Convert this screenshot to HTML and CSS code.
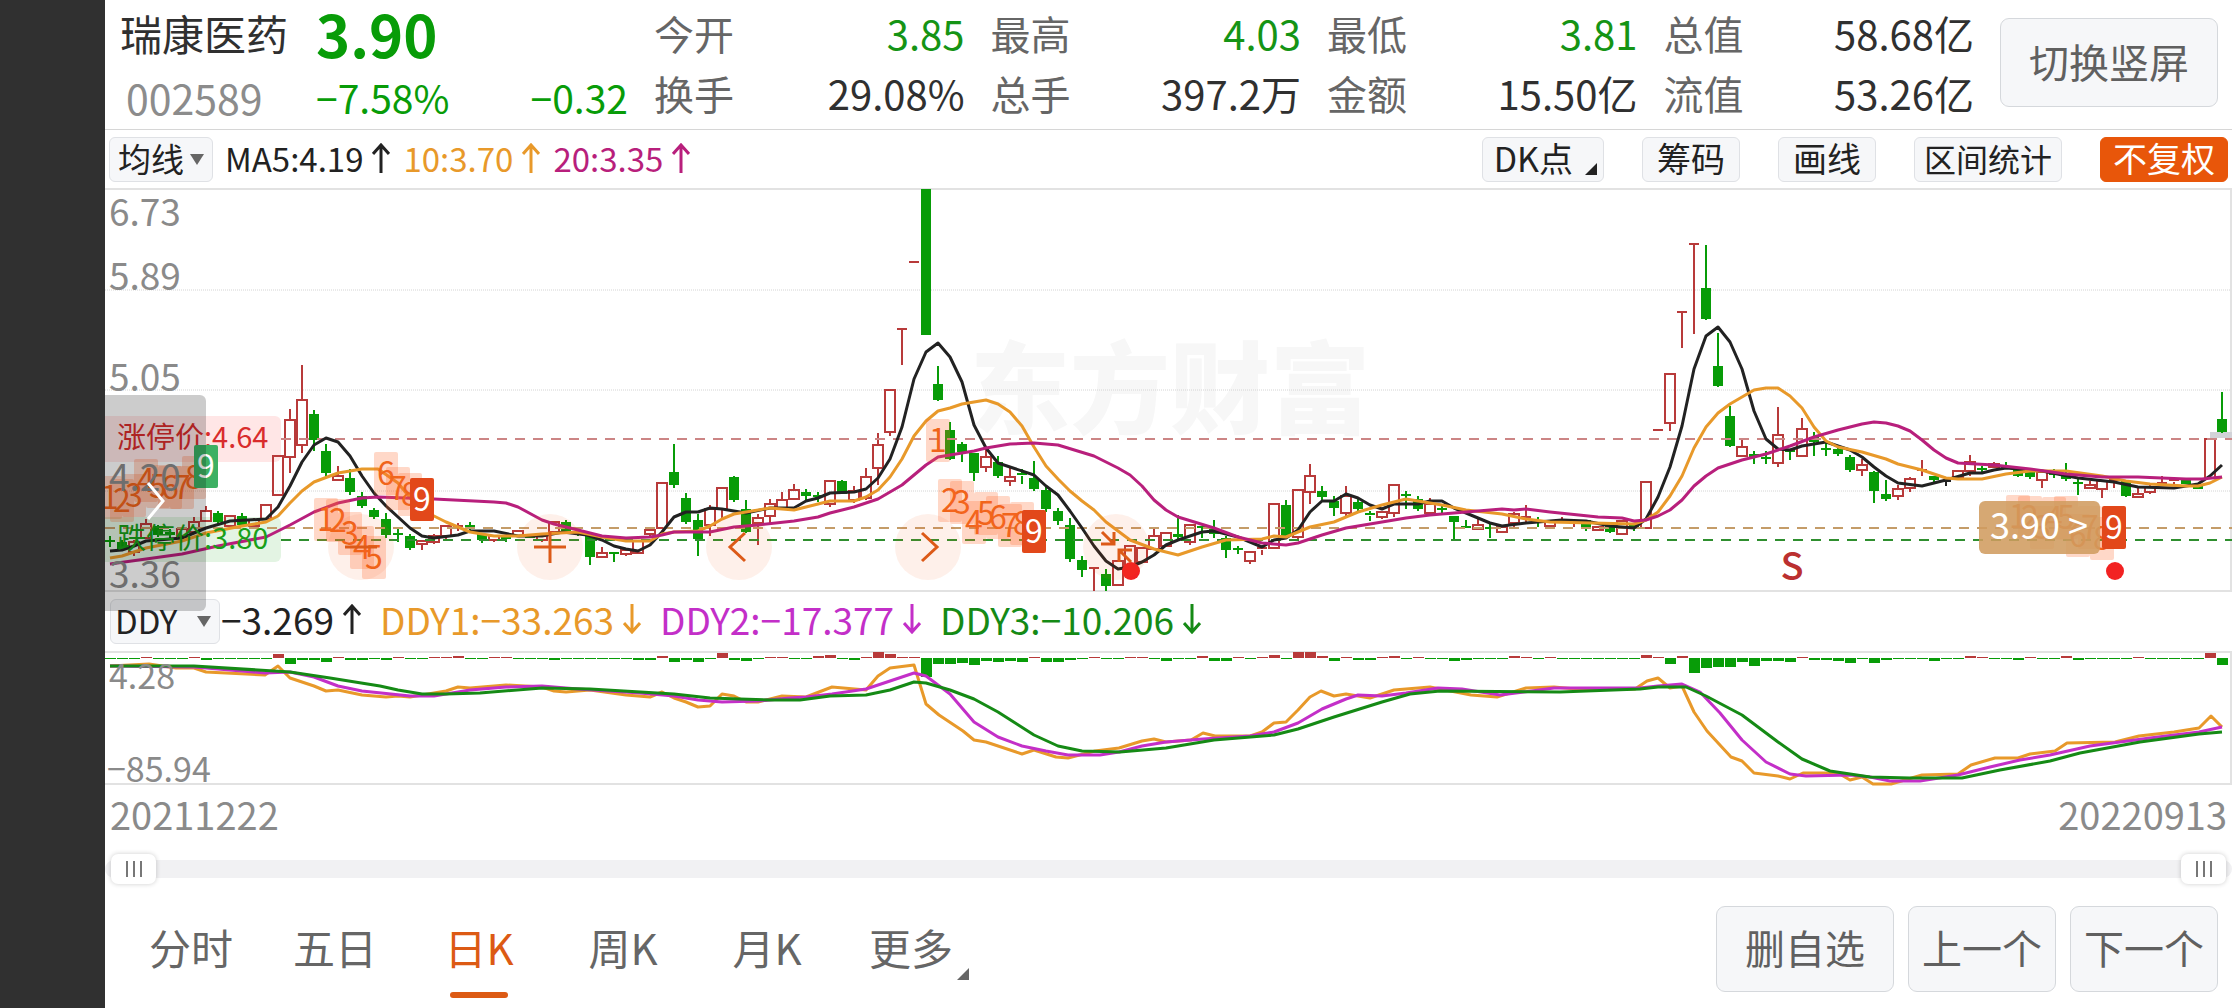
FILE: index.html
```html
<!DOCTYPE html>
<html lang="zh-CN">
<head>
    <meta charset="UTF-8">
    <meta name="viewport" content="width=device-width, initial-scale=1.0">
    <title>瑞康医药 002589</title>
    <link rel="stylesheet" href="styles.css">
</head>
<body>
    <main class="screen">
        <header class="quote">
            <div class="stock">
                <h1 class="name">瑞康医药</h1>
                <span class="code">002589</span>
            </div>
            <div class="price">
                <strong class="last">3.90</strong>
                <div class="change"><span>−7.58%</span><span>−0.32</span></div>
            </div>
            <dl class="stats">
                <div><dt>今开</dt><dd class="down">3.85</dd></div>
                <div><dt>最高</dt><dd class="down">4.03</dd></div>
                <div><dt>最低</dt><dd class="down">3.81</dd></div>
                <div><dt>总值</dt><dd>58.68亿</dd></div>
                <div><dt>换手</dt><dd>29.08%</dd></div>
                <div><dt>总手</dt><dd>397.2万</dd></div>
                <div><dt>金额</dt><dd>15.50亿</dd></div>
                <div><dt>流值</dt><dd>53.26亿</dd></div>
            </dl>
            <button class="btn rotate" type="button">切换竖屏</button>
        </header>

        <section class="toolbar">
            <div class="picker picker-ma">
                <select aria-label="主图指标"><option>均线</option></select>
            </div>
            <p class="legend legend-ma">
                <span class="black">MA5:4.19<svg class="arrow" viewBox="0 0 18 30"><path d="M9 30V2M1 11L9 2L17 11"/></svg></span>
                <span class="orange">10:3.70<svg class="arrow" viewBox="0 0 18 30"><path d="M9 30V2M1 11L9 2L17 11"/></svg></span>
                <span class="magenta">20:3.35<svg class="arrow" viewBox="0 0 18 30"><path d="M9 30V2M1 11L9 2L17 11"/></svg></span>
            </p>
            <div class="tools">
                <button class="chip more" type="button">DK点</button>
                <button class="chip" type="button">筹码</button>
                <button class="chip" type="button">画线</button>
                <button class="chip long" type="button">区间统计</button>
                <button class="chip on" type="button">不复权</button>
            </div>
        </section>

        <section class="kline">
            <svg id="kline" class="chart" viewBox="105 189 2127 404">
                <text class="watermark" x="970" y="427">东方财富</text>
                <g class="grid">
                    <path d="M105 291H2232M105 391H2232M105 492H2232"/>
                </g>
                <path class="frame" d="M105 190H2231V592H105"/>
                <rect class="limit-up-bg" x="99" y="417" width="182" height="46" rx="6"/>
                <rect class="limit-down-bg" x="99" y="518" width="182" height="45" rx="6"/>
                <rect class="gap" x="2210" y="433" width="22" height="6"/>
                <g id="candles"></g>
                <path class="dash up" d="M281 440H2232"/>
                <path class="dash now" d="M105 529H2232"/>
                <path class="dash low" d="M281 541H2232"/>
                <g id="ma"></g>
                <g id="counts"></g>
                <g class="axis">
                    <text x="109" y="227">6.73</text>
                    <text x="109" y="291">5.89</text>
                    <text x="109" y="392">5.05</text>
                    <text x="109" y="492">4.20</text>
                    <text x="109" y="589">3.36</text>
                </g>
                <text class="limit up-text" x="117" y="449">涨停价:4.64</text>
                <text class="limit down-text" x="117" y="550">跌停价:3.80</text>
                <g class="price-tag">
                    <rect x="1979" y="502" width="121" height="53" rx="6"/>
                    <text x="1990" y="540">3.90 &gt;</text>
                </g>
                <g id="nines"></g>
                <circle class="dot" cx="1131" cy="572" r="9"/>
                <circle class="dot" cx="2115" cy="572" r="9"/>
                <text class="sell" x="1792" y="581">S</text>
            </svg>
            <div class="zoom-bar">
                <button type="button" aria-label="缩小"><svg viewBox="0 0 66 66"><path d="M17 33H49"/></svg></button>
                <button type="button" aria-label="放大"><svg viewBox="0 0 66 66"><path d="M17 33H49M33 17V49"/></svg></button>
                <button type="button" aria-label="左移"><svg viewBox="0 0 66 66"><path d="M39 19L24 33L39 47"/></svg></button>
                <button type="button" aria-label="右移"><svg viewBox="0 0 66 66"><path d="M27 19L42 33L27 47"/></svg></button>
                <button type="button" aria-label="收起"><svg viewBox="0 0 66 66"><path d="M19 18L31 30M31 18V30H18M48 48L36 36M36 48V36H49"/></svg></button>
            </div>
            <button class="drawer" type="button" aria-label="展开">
                <svg viewBox="0 0 20 40"><path d="M2 2L17 20L2 38"/></svg>
            </button>
        </section>

        <section class="toolbar toolbar-ddy">
            <div class="picker picker-ddy">
                <select aria-label="副图指标"><option>DDY</option></select>
            </div>
            <p class="legend legend-ddy">
                <span class="black">−3.269<svg class="arrow" viewBox="0 0 18 30"><path d="M9 30V2M1 11L9 2L17 11"/></svg></span>
                <span class="orange">DDY1:−33.263<svg class="arrow" viewBox="0 0 18 30"><path d="M9 0V28M1 19L9 28L17 19"/></svg></span>
                <span class="violet">DDY2:−17.377<svg class="arrow" viewBox="0 0 18 30"><path d="M9 0V28M1 19L9 28L17 19"/></svg></span>
                <span class="green">DDY3:−10.206<svg class="arrow" viewBox="0 0 18 30"><path d="M9 0V28M1 19L9 28L17 19"/></svg></span>
            </p>
        </section>

        <svg id="ddy" class="chart" viewBox="105 651 2127 136">
            <path class="frame" d="M105 653H2231V785H105"/>
            <g id="bars"></g>
            <g id="ddyLines"></g>
            <g class="axis axis-ddy">
                <text x="109" y="690">4.28</text>
                <text x="107" y="783">−85.94</text>
            </g>
        </svg>

        <div class="dates"><span>20211222</span><span>20220913</span></div>

        <div class="range">
            <input type="range" min="0" max="100" value="0" aria-label="起始日期">
            <input type="range" min="0" max="100" value="100" aria-label="结束日期">
        </div>

        <footer class="bottom">
            <nav class="tabs">
                <a href="#">分时</a>
                <a href="#">五日</a>
                <a href="#" class="active">日K</a>
                <a href="#">周K</a>
                <a href="#">月K</a>
                <a href="#" class="more">更多</a>
            </nav>
            <div class="actions">
                <button class="btn wide" type="button">删自选</button>
                <button class="btn" type="button">上一个</button>
                <button class="btn" type="button">下一个</button>
            </div>
        </footer>
    </main>

    <script>
        const NS = 'http://www.w3.org/2000/svg';
        const STEP = 12;
        const FIRST = 110;

        // color, high, body top, body bottom, low
        const candles = `
g 537 542 543 548|g 541 543 551 552|r 541 543 553 557|r 520 525 539 539|g 526 527 536 538|g 530 533 536 539|r 530 530 537 537|r 518 523 533 533|r 507 512 522 523|g 512 514 523 525
r 517 517 527 527|g 514 517 526 528|r 519 521 527 527|r 506 506 520 520|r 457 457 496 496|r 410 421 458 474|r 366 401 446 454|g 411 415 441 452|g 445 452 474 479|r 467 477 481 481
g 470 479 493 496|g 493 497 507 509|g 509 511 518 520|g 514 520 536 539|g 530 535 536 543|g 535 537 549 551|r 541 542 545 551|r 535 537 543 545|r 527 527 537 542|r 524 527 528 532
g 523 527 529 533|g 535 535 541 544|r 537 537 541 543|g 537 537 540 543|r 532 532 537 537|g 535 535 539 539|r 537 537 541 543|r 523 523 533 533|g 521 523 532 532|g 531 533 535 537
g 537 537 558 566|r 548 554 558 558|g 553 554 555 563|r 551 551 555 557|r 542 542 554 554|r 528 531 535 537|r 484 484 529 529|g 445 473 486 489|g 494 499 523 525|g 515 521 540 557
r 506 510 526 537|r 489 489 510 520|g 477 478 501 503|g 501 510 533 534|r 515 519 524 546|r 500 505 517 524|r 493 501 510 510|r 485 491 500 500|g 490 493 497 501|g 493 497 498 503
r 482 482 505 508|g 481 482 495 495|r 487 492 501 504|r 469 478 499 501|r 434 446 469 486|r 391 391 433 437|r 330 330 330 366|r 263 263 263 263|g 190 190 336 336|g 367 385 401 402
g 423 431 460 461|g 443 445 453 463|g 454 454 474 482|r 450 458 468 473|g 457 463 477 479|r 468 478 482 487|g 470 475 477 485|g 462 479 490 492|g 488 491 510 513|g 509 512 522 526
g 519 526 560 563|g 557 561 571 578|r 569 569 569 592|g 570 575 587 592|r 562 562 586 586|r 547 547 567 567|r 549 549 563 563|r 530 537 550 550|r 534 534 547 547|g 516 535 538 540
r 526 526 543 546|g 527 528 529 539|g 521 530 535 539|g 537 539 551 559|g 547 550 551 555|r 553 553 562 565|r 547 549 551 556|r 505 505 549 549|g 501 506 537 537|r 491 491 538 541
r 465 477 493 505|g 487 492 498 502|g 497 502 509 517|r 487 497 514 517|g 498 503 510 513|g 512 515 517 522|r 512 513 518 520|r 486 486 514 518|g 492 496 497 510|g 497 500 510 512
r 499 505 514 514|g 507 510 511 515|g 517 517 523 540|g 521 528 529 529|r 520 526 530 530|g 525 529 530 539|r 528 528 533 533|r 513 515 524 528|r 506 518 520 523|g 518 522 523 528
r 523 523 527 527|r 518 521 523 523|r 521 522 522 528|g 521 521 530 532|r 528 528 531 531|g 527 527 533 534|r 522 522 535 535|g 525 525 529 532|r 483 483 529 529|r 431 431 431 431
r 375 375 424 432|r 313 313 313 349|r 245 245 245 335|g 246 289 320 321|g 334 367 387 388|g 407 417 447 448|r 439 448 457 457|g 452 455 458 465|g 452 459 460 465|r 408 436 464 468
g 450 452 453 461|r 419 430 457 457|g 433 438 443 457|g 443 450 451 457|g 449 450 455 457|g 456 458 471 473|r 460 466 471 477|g 472 473 492 504|g 481 495 500 502|r 486 490 497 501
r 478 480 489 493|r 461 471 472 477|g 477 477 481 483|k 481 482 482 487|r 472 472 479 479|r 456 463 472 477|g 467 470 471 474|r 463 465 468 468|g 463 468 469 470|g 470 470 477 478
g 472 472 478 480|r 473 473 481 489|g 470 475 476 479|g 464 475 480 482|g 480 484 485 496|r 482 486 489 489|r 482 482 490 499|r 479 481 482 489|g 482 482 497 498|r 487 495 498 498
r 485 488 493 495|r 477 484 485 487|r 479 481 483 487|g 481 481 485 485|g 485 485 490 490|r 440 440 479 479|g 393 420 433 434`
            .trim().split(/[|\n]/).map(row => row.trim().split(' '));

        const ma = {
            ma5: '110,552 122,551 134,547 146,542 182,539 206,529 230,522 266,520 278,508 290,487 302,463 314,446 326,439 338,443 350,457 362,477 374,494 386,507 410,529 422,537 434,539 458,536 470,532 494,532 518,537 542,537 563,533 587,536 602,541 614,547 626,550 638,552 650,546 662,533 674,518 686,513 698,513 710,509 722,510 746,514 770,509 794,509 806,502 818,499 830,494 854,493 866,490 878,479 890,460 902,428 914,380 926,353 938,344 950,358 962,383 974,426 986,449 998,464 1010,468 1034,476 1046,487 1058,496 1070,512 1082,529 1094,547 1106,562 1118,570 1130,568 1142,563 1154,556 1166,546 1178,541 1190,537 1202,533 1214,532 1238,538 1262,548 1274,541 1286,539 1298,531 1310,513 1322,502 1334,502 1346,495 1358,499 1370,506 1382,510 1394,505 1418,505 1430,502 1442,502 1454,509 1478,519 1490,524 1502,527 1526,524 1562,521 1586,522 1610,527 1634,529 1646,520 1658,498 1670,468 1682,427 1694,370 1706,337 1718,328 1730,343 1742,370 1754,412 1766,440 1778,450 1790,451 1802,447 1826,443 1850,451 1862,458 1874,468 1886,477 1898,484 1922,487 1946,481 1970,474 1982,474 1994,471 2006,469 2042,472 2078,479 2114,483 2138,488 2174,489 2198,485 2210,477 2222,466',
            ma10: '110,559 122,557 146,549 182,542 206,534 242,527 266,523 278,517 290,504 302,492 314,483 338,474 362,470 378,470 398,484 416,506 434,517 446,523 470,533 494,537 518,537 542,535 578,533 602,538 626,542 650,542 662,535 674,533 698,532 710,527 722,520 734,515 770,509 794,511 806,508 830,502 854,502 866,498 878,491 890,478 902,460 914,437 926,422 938,412 950,409 962,405 986,401 998,405 1010,413 1022,427 1034,448 1046,467 1058,480 1070,492 1082,502 1094,511 1106,523 1130,541 1154,550 1178,556 1202,548 1226,541 1262,540 1274,537 1286,538 1310,528 1334,523 1358,513 1382,506 1394,503 1406,500 1430,504 1442,506 1466,511 1502,515 1526,520 1550,523 1634,525 1646,521 1658,513 1670,497 1682,477 1694,449 1706,428 1718,414 1730,405 1754,391 1766,389 1778,389 1790,397 1802,409 1814,428 1826,442 1838,448 1862,453 1886,460 1898,465 1922,471 1946,479 1958,480 1982,480 2006,475 2030,472 2066,472 2102,477 2126,482 2150,485 2186,487 2198,487 2210,484 2222,478',
            ma20: '110,565 182,555 218,547 266,538 290,526 314,513 338,504 362,499 378,498 434,500 494,503 506,504 518,508 542,521 554,525 578,531 602,537 626,539 650,538 662,536 674,533 710,533 734,528 758,526 794,522 818,518 830,514 854,508 878,500 902,486 926,466 938,458 950,456 974,452 986,449 1010,445 1034,444 1058,446 1094,457 1118,469 1130,476 1142,487 1154,501 1166,511 1178,518 1214,529 1238,538 1262,544 1286,546 1298,544 1322,536 1346,529 1406,519 1430,516 1478,512 1502,510 1514,511 1526,510 1550,513 1598,518 1622,519 1634,522 1646,521 1658,517 1670,511 1682,501 1694,487 1706,477 1718,469 1742,461 1766,455 1790,447 1814,438 1838,431 1862,425 1874,423 1886,424 1898,427 1910,432 1922,441 1934,451 1946,459 1958,464 1994,466 2030,470 2066,475 2102,478 2138,478 2186,480 2202,480 2222,478'
        };

        const ddy = {
            ddy1: '110,667 149,665 176,669 194,669 206,673 265,676 278,667 290,679 314,687 326,692 338,691 362,696 386,698 398,697 410,698 434,694 446,692 458,688 470,689 506,686 542,688 554,692 566,693 590,691 626,696 650,698 662,693 674,699 686,703 698,708 710,707 722,695 734,697 746,703 758,703 782,697 806,698 832,688 866,691 878,677 890,669 914,666 926,705 939,716 963,732 974,741 986,743 1022,755 1034,751 1056,758 1068,759 1095,752 1119,749 1142,742 1154,740 1166,743 1191,741 1203,734 1215,737 1250,737 1262,733 1274,724 1286,723 1298,711 1310,698 1321,692 1334,697 1346,695 1370,699 1394,691 1430,688 1471,696 1497,698 1526,689 1554,688 1576,690 1635,690 1647,682 1658,679 1670,689 1682,687 1694,713 1707,732 1731,758 1742,762 1754,774 1778,777 1790,780 1803,774 1838,774 1850,781 1862,778 1873,785 1891,785 1922,776 1958,775 1971,766 1995,759 2018,759 2030,755 2055,752 2067,744 2115,743 2139,737 2174,733 2199,729 2211,717 2222,728',
            ddy2: '110,667 194,668 218,670 265,674 290,673 314,678 338,687 362,692 410,697 434,697 470,691 506,688 542,687 578,690 640,694 674,697 698,701 722,703 758,702 790,699 806,698 832,695 866,690 890,682 914,674 926,677 950,695 974,723 998,738 1022,747 1046,752 1068,756 1100,756 1119,753 1142,747 1166,743 1203,740 1250,737 1274,733 1298,724 1322,710 1346,700 1358,696 1382,697 1406,694 1438,689 1462,690 1500,696 1554,689 1600,689 1640,689 1658,687 1682,685 1700,693 1720,714 1742,741 1766,763 1790,775 1806,777 1850,776 1870,778 1890,782 1920,782 1958,776 1990,768 2020,761 2050,756 2090,747 2150,739 2199,733 2222,728',
            ddy3: '110,667 194,667 290,673 330,679 380,687 398,691 422,695 446,695 480,694 542,689 590,690 674,695 710,699 740,700 770,701 800,701 830,697 866,696 890,691 914,683 926,684 950,691 974,700 998,713 1034,736 1058,747 1082,752 1120,753 1166,749 1214,741 1274,736 1298,730 1334,718 1382,703 1410,695 1440,692 1560,693 1640,690 1658,688 1686,688 1706,697 1742,716 1778,743 1802,760 1830,772 1870,778 1910,779 1962,779 2000,771 2050,762 2080,754 2140,743 2199,735 2222,733'
        };

        // histogram: index -> height, everything else is a flat -1
        const bars = {
            3: 1, 7: 1, 8: -2, 14: 4, 15: -6, 16: -2, 17: -2, 18: -4, 19: 1, 20: -2, 21: -2, 23: -2, 24: 1, 27: 1, 28: 1, 29: 2,
            32: 1, 33: 1, 37: -2, 44: -2, 45: -2, 46: 2, 47: -4, 48: -2, 49: -4, 51: 5, 52: -2, 53: -3, 55: 1, 56: 1, 59: 2,
            60: 3, 62: -2, 63: 1, 64: 6, 65: 4, 66: 1, 67: 1, 68: -19, 69: -6, 70: -6, 71: -5, 72: -7, 73: -3, 74: -4, 75: -3,
            76: -4, 77: 1, 78: -4, 79: -4, 80: -2, 82: 1, 85: 1, 86: 1, 88: -3, 91: 2, 92: -3, 93: -3, 94: 1, 96: 1, 97: 3,
            99: 6, 100: 6, 101: 2, 102: -3, 103: 1, 104: -2, 105: -2, 106: 1, 107: 2, 109: 1, 112: -3, 113: -2, 117: 2, 118: 1,
            120: 1, 128: 3, 129: 1, 130: -6, 131: 2, 132: -15, 133: -10, 134: -9, 135: -9, 136: -4, 137: -8, 138: -3, 139: -3,
            140: -4, 141: 1, 142: -2, 143: -2, 144: -3, 145: -5, 147: -5, 148: -2, 152: -3, 155: 2, 156: 1, 159: -2, 160: 1,
            163: 2, 164: -2, 169: 1, 175: 5, 176: -7
        };

        // nine-turn counts: start index and the top of each mark
        const turns = [
            { start: 0, tops: [477, 480, 475, 460, 466, 467, 467, 457, 446], cls: 'sell-turn' },
            { start: 18, tops: [499, 500, 513, 527, 537], cls: 'buy-turn' },
            { start: 23, from: 6, tops: [453, 468, 474, 479], cls: 'buy-turn' },
            { start: 69, tops: [420, 480, 482, 502, 493, 497, 505, 503, 511], cls: 'buy-turn' },
            { start: 159, tops: [496, 497, 507, 498, 497, 515, 507, 518, 507], cls: 'buy-turn' }
        ];

        function add(parent, tag, attrs, text) {
            const el = document.createElementNS(NS, tag);
            for (const key in attrs) el.setAttribute(key, attrs[key]);
            if (text) el.textContent = text;
            parent.appendChild(el);
        }

        const candleGroup = document.getElementById('candles');
        candles.forEach((row, i) => {
            const x = FIRST + i * STEP;
            const [high, top, bottom, low] = row.slice(1).map(Number);
            const wick = `M${x} ${high}V${top}M${x} ${bottom}V${low}`;
            add(candleGroup, 'path', { class: 'wick ' + row[0], d: wick });
            if (bottom - top < 3) {
                add(candleGroup, 'path', { class: 'wick ' + row[0], d: `M${x - 5} ${top}H${x + 5}` });
            } else if (row[0] === 'r') {
                add(candleGroup, 'rect', { class: 'hollow', x: x - 5, y: top, width: 10, height: bottom - top });
            } else {
                add(candleGroup, 'rect', { class: 'solid', x: x - 5, y: top, width: 10, height: bottom - top });
            }
        });

        const maGroup = document.getElementById('ma');
        for (const key in ma) add(maGroup, 'polyline', { class: 'line ' + key, points: ma[key] });

        const barGroup = document.getElementById('bars');
        candles.forEach((row, i) => {
            const h = bars[i] || -1;
            add(barGroup, 'rect', {
                class: h > 0 ? 'bar-up' : 'bar-down',
                x: FIRST + i * STEP - 5,
                y: h > 0 ? 659 - h : 659,
                width: 11,
                height: Math.abs(h)
            });
        });

        const ddyGroup = document.getElementById('ddyLines');
        for (const key in ddy) add(ddyGroup, 'polyline', { class: 'line ' + key, points: ddy[key] });

        turns.forEach(turn => {
            turn.tops.forEach((top, k) => {
                const n = (turn.from || 1) + k;
                const x = FIRST + (turn.start + k) * STEP;
                const group = document.getElementById(n === 9 ? 'nines' : 'counts');
                const cls = n === 9 ? 'nine ' + turn.cls : 'count';
                add(group, 'rect', { class: cls, x: x - 12, y: top, width: 24, height: 43, rx: 2 });
                add(group, 'text', { class: n === 9 ? 'nine-text' : 'count-text', x: x, y: top + 33 }, String(n));
            });
        });
    </script>
</body>
</html>
```
FILE: styles.css
```css
* {
    box-sizing: border-box;
}
body {
    margin: 0;
    background: #303030;
    color: #303030;
    font-family: "Noto Sans CJK SC", "Noto Sans", sans-serif;
}
button, select {
    font-family: inherit;
    color: inherit;
}
.screen {
    margin-left: 105px;
    background: #fff;
    min-height: 100vh;
}

/* header */
.quote {
    display: flex;
    align-items: center;
    height: 130px;
    padding: 0 14px 4px 15px;
    border-bottom: 1px solid #d6d6d6;
}
.stock {
    width: 196px;
}
.name {
    margin: 0;
    font-size: 42px;
    line-height: 68px;
    font-weight: 400;
}
.code {
    display: block;
    padding-left: 6px;
    font-size: 41px;
    line-height: 60px;
    color: #8c8c8c;
}
.price {
    width: 312px;
    color: #089c08;
}
.last {
    display: block;
    font-size: 58px;
    line-height: 68px;
    font-weight: 700;
}
.change {
    display: flex;
    justify-content: space-between;
    font-size: 39px;
    line-height: 60px;
}
.stats {
    flex: 1;
    display: grid;
    grid-template-columns: repeat(4, 1fr);
    column-gap: 26px;
    margin: 0 26px;
    font-size: 40px;
    line-height: 60px;
}
.stats div {
    display: flex;
    justify-content: space-between;
}
.stats dt {
    color: #666;
}
.stats dd {
    margin: 0;
}
.stats .down {
    color: #159415;
}
.btn {
    width: 148px;
    height: 86px;
    padding: 0 0 4px;
    font-size: 40px;
    color: #606060;
    background: #f6f7f9;
    border: 1px solid #d5d8dc;
    border-radius: 9px;
}
.btn.wide {
    width: 178px;
}
.btn.rotate {
    width: 218px;
    height: 89px;
}

/* indicator rows */
.toolbar {
    display: flex;
    align-items: center;
    height: 59px;
    padding: 0 4px;
}
.toolbar-ddy {
    height: 58px;
    padding-left: 5px;
}
.picker {
    position: relative;
}
.picker select {
    appearance: none;
    width: 104px;
    height: 45px;
    padding: 0 8px 4px;
    font-size: 33px;
    line-height: 40px;
    color: #222;
    background: #f6f7f9;
    border: 1px solid #dfe1e5;
    border-radius: 6px;
}
.picker-ddy select {
    width: 110px;
    padding: 0 4px 4px;
}
.picker::after {
    content: "";
    position: absolute;
    right: 9px;
    top: 17px;
    border: 7px solid transparent;
    border-top: 11px solid #666;
    border-bottom: 0;
}
.legend {
    display: flex;
    gap: 13px;
    margin: 0 0 0 12px;
    padding-bottom: 4px;
    font-size: 33px;
    line-height: 44px;
}
.legend span {
    display: flex;
    align-items: center;
    gap: 9px;
}
.legend-ddy {
    gap: 19px;
    margin-left: 1px;
    font-size: 37px;
}
.arrow {
    width: 18px;
    height: 30px;
    fill: none;
    stroke: currentColor;
    stroke-width: 3;
}
.black { color: #222; }
.orange { color: #e8992a; }
.magenta { color: #b81f7c; }
.violet { color: #c32fc8; }
.green { color: #158a15; }
.tools {
    display: flex;
    gap: 38px;
    margin-left: auto;
}
.chip {
    position: relative;
    height: 45px;
    padding: 0 14px 4px;
    font-size: 34px;
    line-height: 40px;
    color: #222;
    background: #f6f7f9;
    border: 1px solid #dfe1e5;
    border-radius: 6px;
}
.chip.more {
    padding: 0 30px 4px 11px;
}
.chip.long {
    padding: 0 9px 4px;
    font-size: 32px;
}
.chip.more::after,
.tabs .more::after {
    content: "";
    position: absolute;
    right: 6px;
    bottom: 6px;
    border-left: 12px solid transparent;
    border-bottom: 12px solid currentColor;
}
.chip.on {
    padding: 0 12px 4px;
    color: #fff;
    background: #e8560a;
    border-color: #e8560a;
}

/* charts */
.chart {
    display: block;
    width: 100%;
    height: auto;
}
.kline {
    position: relative;
    margin-top: -1px;
}
.frame {
    fill: none;
    stroke: #e2e2e2;
    stroke-width: 2;
}
.grid path {
    stroke: #d4d4d4;
    stroke-dasharray: 1 1;
}
.watermark {
    font-size: 100px;
    font-weight: 900;
    fill: #f7f7f7;
}
.axis text {
    font-size: 37px;
    fill: #8a8a8a;
}
.axis-ddy text {
    font-size: 34px;
}
.limit-up-bg { fill: #ffe6e6; }
.limit-down-bg { fill: #e3f4e3; }
.limit { font-size: 29px; }
.up-text { fill: #d92c2c; }
.down-text { fill: #18a018; }
.gap { fill: #d2d3d8; }
.dash {
    fill: none;
    stroke-dasharray: 10 8;
}
.dash.up { stroke: #cc8585; stroke-width: 2; }
.dash.now { stroke: #c49c68; stroke-width: 2; }
.dash.low { stroke: #2f8f2f; stroke-width: 2; }
.wick {
    stroke-width: 2;
}
.wick.r { stroke: #b83a3a; }
.wick.g { stroke: #089c08; }
.wick.k { stroke: #222; }
.hollow {
    fill: none;
    stroke: #b83a3a;
    stroke-width: 2;
}
.solid { fill: #089c08; }
.line {
    fill: none;
    stroke-width: 3;
    stroke-linejoin: round;
}
.ma5 { stroke: #222; }
.ma10, .ddy1 { stroke: #e8992a; }
.ma20 { stroke: #b81f7c; }
.ddy2 { stroke: #c32fc8; }
.ddy3 { stroke: #158a15; }
.bar-up { fill: #b83a3a; }
.bar-down { fill: #089c08; }
.count {
    fill: #ff6a2a;
    fill-opacity: 0.26;
}
.count-text, .nine-text {
    font-size: 32px;
    text-anchor: middle;
    fill: #f0641a;
}
.nine-text { fill: #fff; }
.buy-turn { fill: #e2481a; }
.sell-turn { fill: #3db063; }
.price-tag rect {
    fill: #d09c60;
    fill-opacity: 0.88;
}
.price-tag text {
    font-size: 36px;
    fill: #fff;
}
.dot { fill: #f22222; }
.sell {
    font-size: 38px;
    font-weight: 500;
    text-anchor: middle;
    fill: #bb3030;
}
.zoom-bar {
    position: absolute;
    left: 10.5%;
    width: 38.6%;
    bottom: 12px;
    display: flex;
    justify-content: space-between;
}
.zoom-bar button {
    width: 66px;
    height: 66px;
    padding: 0;
    border: 0;
    border-radius: 50%;
    background: rgba(240, 90, 20, 0.09);
}
.zoom-bar svg {
    display: block;
    fill: none;
    stroke: #dc5a18;
    stroke-width: 3;
}
.drawer {
    position: absolute;
    left: 0;
    bottom: -19px;
    z-index: 1;
    width: 101px;
    height: 216px;
    padding: 0;
    border: 0;
    border-radius: 0 6px 6px 0;
    background: rgba(0, 0, 0, 0.2);
}
.drawer svg {
    width: 20px;
    height: 40px;
    fill: none;
    stroke: #fff;
    stroke-width: 3;
}

/* dates and range */
.dates {
    display: flex;
    justify-content: space-between;
    padding: 0 5px 4px;
    font-size: 38px;
    line-height: 56px;
    color: #8a8a8a;
}
.range {
    position: relative;
    height: 46px;
    padding: 14px 0;
}
.range::before {
    content: "";
    display: block;
    height: 18px;
    border-radius: 9px;
    background: #f1f1f3;
}
.range input {
    position: absolute;
    left: 6px;
    top: 8px;
    width: calc(100% - 12px);
    height: 30px;
    margin: 0;
    appearance: none;
    background: none;
    pointer-events: none;
}
.range input::-webkit-slider-thumb {
    appearance: none;
    width: 45px;
    height: 30px;
    border-radius: 7px;
    background:
        linear-gradient(#777, #777) 15px 7px / 2px 16px no-repeat,
        linear-gradient(#777, #777) 22px 7px / 2px 16px no-repeat,
        linear-gradient(#777, #777) 29px 7px / 2px 16px no-repeat,
        #fff;
    box-shadow: 0 0 5px rgba(0, 0, 0, 0.2);
    pointer-events: auto;
}

/* bottom bar */
.bottom {
    display: flex;
    justify-content: space-between;
    align-items: center;
    height: 114px;
    padding: 0 14px;
}
.tabs {
    display: flex;
}
.tabs a {
    position: relative;
    width: 144px;
    padding-bottom: 4px;
    font-size: 42px;
    line-height: 94px;
    text-align: center;
    text-decoration: none;
    color: #666;
}
.tabs .active {
    color: #dc5a14;
}
.tabs .active::after {
    content: "";
    position: absolute;
    left: 43px;
    bottom: 0;
    width: 58px;
    height: 6px;
    border-radius: 3px;
    background: #dc5a14;
}
.tabs .more::after {
    right: 14px;
    bottom: 18px;
}
.actions {
    display: flex;
    gap: 14px;
}
```
